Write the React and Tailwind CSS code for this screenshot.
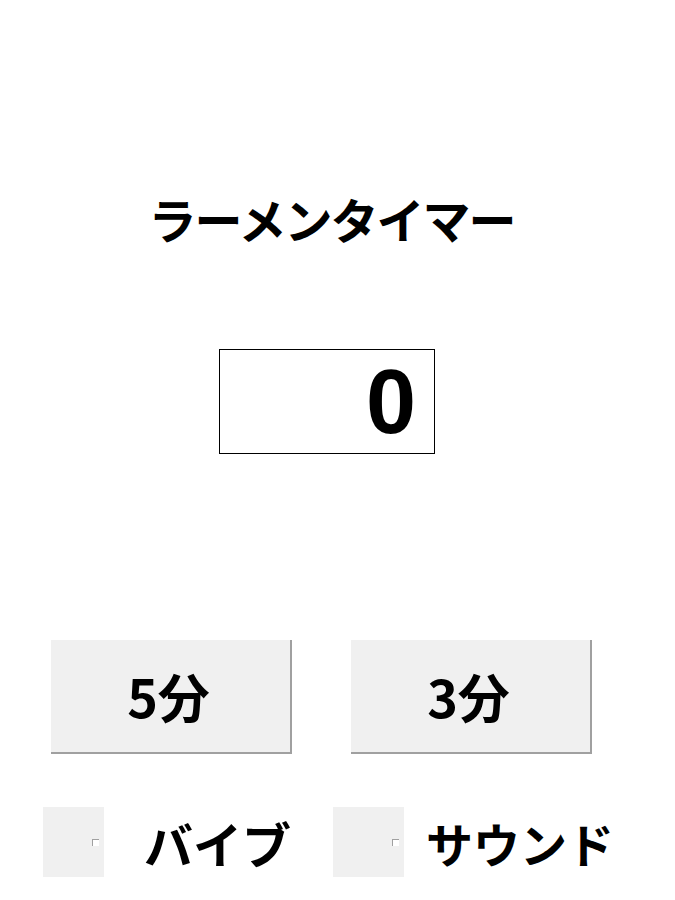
import React from 'react';

const font = { fontFamily: '"Noto Sans CJK JP", "Noto Sans", sans-serif' };

const Toggle = ({ label, boxClass, labelClass }) => (
  <div className="flex items-center">
    <div className={`relative h-[70px] bg-[#f0f0f0] ${boxClass}`}>
      <span className="absolute right-[5px] top-[32px] w-[7px] h-[7px] bg-white border-l border-t border-[#a0a0a0]" />
    </div>
    <span className={`font-bold leading-none text-black ${labelClass}`}>{label}</span>
  </div>
);

export default function App() {
  return (
    <div className="w-[675px] h-[900px] bg-white flex flex-col text-black" style={font}>
      <h1 className="mt-[188px] text-center text-[48px] font-bold leading-[60px] tracking-[-2px] pr-[12px]">
        ラーメンタイマー
      </h1>

      <div className="mt-[101px] ml-[219px] w-[216px] h-[105px] border border-black flex items-center justify-end pr-[18px]">
        <span className="text-[90px] font-bold leading-none" style={{ fontFamily: '"Liberation Sans", sans-serif' }}>0</span>
      </div>

      <div className="mt-[186px] flex gap-[59px] pl-[51px]">
        {['5分', '3分'].map(t => (
          <button
            key={t}
            className="w-[241px] h-[114px] bg-[#f0f0f0] border-r-2 border-b-2 border-[#a0a0a0] flex items-center justify-center text-[52px] font-bold leading-none pr-[4px]"
          >
            {t}
          </button>
        ))}
      </div>

      <div className="mt-[53px] flex pl-[43px]">
        <Toggle label="バイブ" boxClass="w-[61px]" labelClass="text-[49px] ml-[40px]" />
        <div className="ml-[42px]">
          <Toggle label="サウンド" boxClass="w-[71px]" labelClass="text-[47px] ml-[22px]" />
        </div>
      </div>
    </div>
  );
}
